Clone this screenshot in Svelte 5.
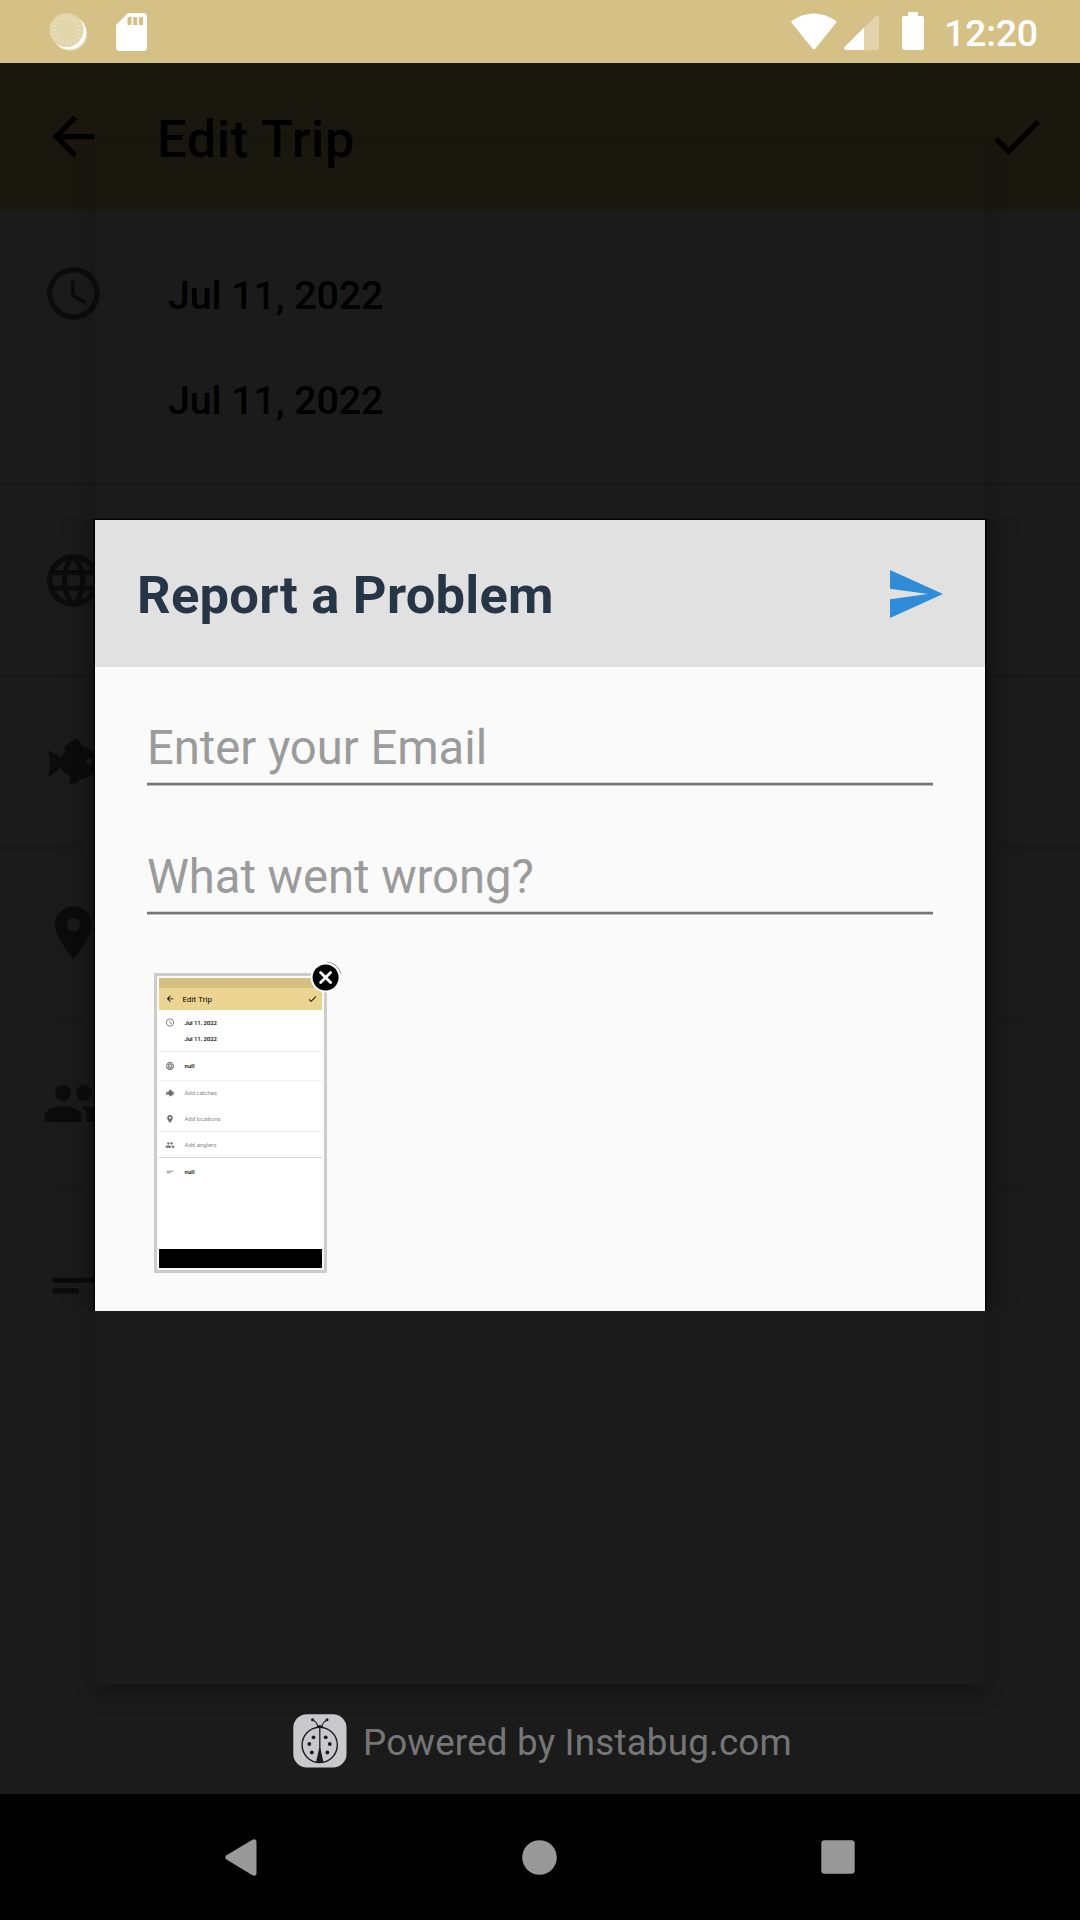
<script>
  const icons = {
    back: 'M20 11H7.83l5.59-5.59L12 4l-8 8 8 8 1.41-1.41L7.83 13H20v-2z',
    check: 'M9 16.17L4.83 12l-1.42 1.41L9 19 21 7l-1.41-1.41z',
    clock:
      'M11.99 2C6.47 2 2 6.48 2 12s4.47 10 9.99 10C17.52 22 22 17.52 22 12S17.52 2 11.99 2zM12 20c-4.42 0-8-3.58-8-8s3.58-8 8-8 8 3.58 8 8-3.58 8-8 8zm.5-13H11v6l5.25 3.15.75-1.23-4.5-2.67z',
    globe:
      'M11.99 2C6.47 2 2 6.48 2 12s4.47 10 9.99 10C17.52 22 22 17.52 22 12S17.52 2 11.99 2zm6.93 6h-2.95c-.32-1.25-.78-2.45-1.38-3.56 1.84.63 3.37 1.91 4.33 3.56zM12 4.04c.83 1.2 1.48 2.53 1.91 3.96h-3.82c.43-1.43 1.08-2.76 1.91-3.96zM4.26 14C4.1 13.36 4 12.69 4 12s.1-1.36.26-2h3.38c-.08.66-.14 1.32-.14 2s.06 1.34.14 2H4.26zm.82 2h2.95c.32 1.25.78 2.45 1.38 3.56-1.84-.63-3.37-1.9-4.33-3.56zm2.95-8H5.08c.96-1.66 2.49-2.93 4.33-3.56C8.81 5.55 8.35 6.75 8.03 8zM12 19.96c-.83-1.2-1.48-2.53-1.91-3.96h3.82c-.43 1.43-1.08 2.76-1.91 3.96zM14.34 14H9.66c-.09-.66-.16-1.32-.16-2s.07-1.35.16-2h4.68c.09.65.16 1.32.16 2s-.07 1.34-.16 2zm.25 5.56c.6-1.11 1.06-2.31 1.38-3.56h2.95c-.96 1.65-2.49 2.93-4.33 3.56zM16.36 14c.08-.66.14-1.32.14-2s-.06-1.34-.14-2h3.38c.16.64.26 1.31.26 2s-.1 1.36-.26 2h-3.38z',
    fish: 'M2.2 8 Q4.8 8.5 7 10.6 Q7.7 9.2 9.2 8.1 L8.2 7 Q9.5 5 13.2 3.1 L15.8 6.2 Q19.8 6.7 22.6 11.7 Q20.5 17.7 15 18.8 Q14 18.8 13.6 19.6 L13.1 20.1 L10.2 20.8 L10.9 17.6 Q8.2 16.5 6.8 14.2 Q4.8 16.8 2.2 18 Q3.8 13 2.2 8 Z M18 10.9 a1.1 1.1 0 1 0 .01 2.2 a1.1 1.1 0 1 0 -.01 -2.2 Z',
    place:
      'M12 2C8.13 2 5 5.13 5 9c0 5.25 7 13 7 13s7-7.75 7-13c0-3.87-3.13-7-7-7zm0 9.5c-1.38 0-2.5-1.12-2.5-2.5s1.12-2.5 2.5-2.5 2.5 1.12 2.5 2.5-1.12 2.5-2.5 2.5z',
    people:
      'M16 11c1.66 0 2.99-1.34 2.99-3S17.66 5 16 5s-3 1.34-3 3 1.34 3 3 3zm-8 0c1.66 0 2.99-1.34 2.99-3S9.66 5 8 5 5 6.34 5 8s1.34 3 3 3zm0 2c-2.33 0-7 1.17-7 3.5V19h14v-2.5c0-2.33-4.67-3.5-7-3.5zm8 0c-.29 0-.62.02-.97.05 1.16.84 1.97 1.97 1.97 3.45V19h6v-2.5c0-2.33-4.67-3.5-7-3.5z',
    notes: 'M4 9h16v2H4zm0 4h10v2H4z'
  };

  const rows = [
    { name: 'dates', icon: 'clock', lines: ['Jul 11, 2022', 'Jul 11, 2022'] },
    { name: 'species', icon: 'globe', lines: [] },
    { name: 'catches', icon: 'fish', lines: [] },
    { name: 'locations', icon: 'place', lines: [] },
    { name: 'anglers', icon: 'people', lines: [] },
    { name: 'notes', icon: 'notes', lines: [] }
  ];

  const preview = [
    { icon: 'clock', y: 44.5, text: 'Jul 11, 2022', width: 32.5, strong: true },
    { icon: null, y: 60.5, text: 'Jul 11, 2022', width: 32.5, strong: true },
    { icon: 'globe', y: 88, text: 'null', width: 10, strong: true },
    { icon: 'fish', y: 115, text: 'Add catches', width: 32.5, strong: false },
    { icon: 'place', y: 141, text: 'Add locations', width: 36, strong: false },
    { icon: 'people', y: 167, text: 'Add anglers', width: 32, strong: false },
    { icon: 'notes', y: 194, text: 'null', width: 10, strong: true }
  ];

  const ticks = Array.from({ length: 20 }, (_, i) => i * 18);
</script>

{#snippet icon(name)}
  <svg class="icon" viewBox="0 0 24 24"><path d={icons[name]} fill-rule="evenodd" /></svg>
{/snippet}

<div class="screen">
  <header class="status">
    <svg class="sync" viewBox="0 0 38 40">
      <circle cx="21" cy="21.5" r="17.3" fill="#fff" opacity=".45" />
      <circle cx="20" cy="20.5" r="17" fill="#fff" />
      <circle cx="17.5" cy="18" r="17" fill="#e2d5aa" />
      {#each ticks as angle}
        <path d="M17.5 2.500v5" stroke="#ebe1c1" stroke-width="1.300" transform="rotate({angle} 17.5 18)" />
      {/each}
    </svg>
    <svg class="sd" viewBox="0 0 31 38">
      <path
        fill="#fff"
        fill-rule="evenodd"
        d="M12 0H27.500a3.500 3.500 0 0 1 3.500 3.500V34.500a3.500 3.500 0 0 1-3.500 3.500H3.500A3.500 3.500 0 0 1 0 34.500V12ZM11.500 4v8h4V4ZM17.300 4v8h4V4ZM23 4v8h4V4Z"
      />
    </svg>
    <span class="grow"></span>
    <svg class="wifi" viewBox="0 0 46 37"><path fill="#fff" d="M.8 10Q-.3 8.500 1 7.600Q22.800-6.400 44.800 7.600Q46.100 8.500 45 10L24.800 35Q22.900 37.600 21 35Z" /></svg>
    <svg class="signal" viewBox="0 0 35 35">
      <path fill="#e2d3ac" d="M0 33L32.500.5Q35-.8 35 2V33a2 2 0 0 1-2 2H2Q0 35 0 33Z" />
      <path fill="#fff" d="M20 12.500V35H2Q-.8 34 .8 31.700Z" />
    </svg>
    <svg class="battery" viewBox="0 0 22 38"><path fill="#fff" d="M6 0h10v4h4a2 2 0 0 1 2 2v30a2 2 0 0 1-2 2H2a2 2 0 0 1-2-2V6a2 2 0 0 1 2-2h4Z" /></svg>
    <span class="time">12:20</span>
  </header>

  <div class="appbar">
    {@render icon('back')}
    <h1>Edit Trip</h1>
    {@render icon('check')}
  </div>

  <main class="trip">
    {#each rows as row}
      <section class="row {row.name}">
        {@render icon(row.icon)}
        <div class="lines">
          {#each row.lines as line}<p>{line}</p>{/each}
        </div>
      </section>
    {/each}
  </main>

  <nav class="navbar">
    <svg viewBox="0 0 32 37"><path fill="#999" d="M1.500 16.300Q-1 18.500 1.500 20.500L27 36Q31.500 38 31.500 34V3Q31.500-1.200 27 1Z" /></svg>
    <svg viewBox="0 0 35 35"><circle cx="17.500" cy="17.500" r="17.300" fill="#999" /></svg>
    <svg viewBox="0 0 34 34"><rect x=".3" y=".3" width="33.400" height="33.400" rx="3" fill="#999" /></svg>
  </nav>

  <div class="window"></div>

  <div class="dialog">
    <div class="titlebar">
      <h2>Report a Problem</h2>
      <svg class="send" viewBox="0 0 53 48"><path fill="#2e8cd8" d="M0 0L53 24L0 48V29.300L38 24L0 18.800Z" /></svg>
    </div>
    <div class="form">
      <div class="field">Enter your Email</div>
      <div class="field">What went wrong?</div>
      <div class="attachment">
        <svg class="shot" viewBox="0 0 163 290">
          <rect width="163" height="290" fill="#fff" />
          <rect width="163" height="10" fill="#d4bf83" />
          <rect y="10" width="163" height="22" fill="#ebd392" />
          <path d={icons.back} transform="translate(6.300 16) scale(.4)" />
          <text class="shot-title" x="23.500" y="24" textLength="29.500">Edit Trip</text>
          <path d={icons.check} transform="translate(148.300 16) scale(.42)" />
          {#each preview as item}
            {#if item.icon}
              <path
                d={icons[item.icon]}
                fill="#6f6f6f"
                fill-rule="evenodd"
                transform="translate(6.200 {item.y - 4.800}) scale(.4)"
              />
            {/if}
            <text class={item.strong ? 'shot-strong' : 'shot-hint'} x="25.500" y={item.y + 2.400} textLength={item.width}>{item.text}</text>
          {/each}
          <path d="M0 73.500H163M0 102.500H163M0 153.500H163" stroke="#eee" />
          <path d="M0 179.500H163" stroke="#d6d6d6" />
          <rect y="271" width="163" height="19" />
        </svg>
        <svg class="remove" viewBox="0 0 32 32">
          <path d="M17 1.200A14.500 14.500 0 0 1 30.800 13" fill="none" stroke="#777" stroke-width=".8" />
          <circle cx="15.600" cy="16.500" r="15" fill="#fff" />
          <circle cx="15.600" cy="16.500" r="13" />
          <path d="M10.600 11.500l10 10M20.600 11.500l-10 10" stroke="#fff" stroke-width="2.800" stroke-linecap="round" />
        </svg>
      </div>
    </div>
  </div>

  <div class="powered">
    <svg viewBox="0 0 54 54">
      <rect x=".3" y=".3" width="53.200" height="53.200" rx="13.500" fill="#c9c8cd" />
      <g fill="none" stroke="#1b1b1b">
        <circle cx="26.700" cy="31" r="17.600" stroke-width="1.400" />
        <path d="M26.800 13V47" stroke-width="1.300" />
        <path d="M25 12Q23.500 8 19.700 5.800M28.800 12Q30.200 8 34 5.800" stroke-width="1.100" />
      </g>
      <g fill="#1b1b1b">
        <path d="M21.500 14.500Q24 11 26.800 11Q29.500 11 32 14.500Q27 12.800 21.500 14.500ZM26.300 34L23 48.300Q26.800 49.500 30.500 48.300L27.300 34Z" />
        <circle cx="19.500" cy="5.700" r="1.500" /><circle cx="34" cy="5.700" r="1.500" />
        <circle cx="20.500" cy="23.300" r="1.900" /><circle cx="32.700" cy="23.300" r="1.900" />
        <circle cx="16.300" cy="30" r="1.900" /><circle cx="36.800" cy="30" r="1.900" />
        <circle cx="18.800" cy="38.500" r="1.900" /><circle cx="34.400" cy="38.500" r="1.900" />
      </g>
    </svg>
    <span>Powered by Instabug.com</span>
  </div>
</div>

<style>
  :global(body) {
    background: #000;
  }
  .screen {
    position: relative;
    display: flex;
    flex-direction: column;
    width: 1080px;
    height: 1920px;
    overflow: hidden;
    background: #1b1b1b;
    font-family: Roboto, 'Liberation Sans', sans-serif;
    white-space: nowrap;
  }
  h1,
  h2,
  p {
    margin: 0;
  }
  svg {
    display: block;
    flex: none;
  }
  .icon {
    width: 63px;
    height: 63px;
  }

  .status {
    display: flex;
    align-items: flex-start;
    box-sizing: border-box;
    height: 63px;
    padding: 12px 0 0 49px;
    background: #d5c085;
  }
  .sync {
    width: 38px;
    height: 40px;
    margin-right: 29px;
  }
  .sd {
    width: 31px;
    height: 38px;
    margin-top: 0.5px;
  }
  .grow {
    flex: 1;
  }
  .wifi {
    width: 46px;
    height: 37px;
    margin: 1px 7px 0 0;
  }
  .signal {
    width: 35px;
    height: 35px;
    margin: 3px 23px 0 0;
  }
  .battery {
    width: 22px;
    height: 38px;
  }
  .time {
    width: 136px;
    margin-left: 20px;
    font-size: 37.5px;
    font-weight: 500;
    letter-spacing: -0.25px;
    line-height: 42px;
    color: #fff;
  }

  .appbar {
    display: flex;
    align-items: center;
    box-sizing: border-box;
    height: 147px;
    padding: 0 32px 0 42px;
    background: #1a170f;
  }
  .appbar h1 {
    flex: 1;
    margin-left: 52px;
    padding-top: 4px;
    font-size: 52.5px;
    font-weight: 500;
    letter-spacing: 0.55px;
    line-height: 62px;
    color: #000;
  }

  .trip {
    flex: 1;
  }
  .row {
    display: flex;
    box-sizing: border-box;
    padding-left: 42px;
    border-bottom: 3px solid #181818;
  }
  .row .icon {
    fill: #0c0c0c;
  }
  .lines {
    margin-left: 63px;
    font-size: 39.4px;
    font-weight: 500;
    letter-spacing: -0.1px;
    line-height: 105px;
  }
  .dates {
    height: 276px;
    padding-top: 52px;
  }
  .dates .lines {
    margin-top: -19px;
  }
  .species {
    height: 192px;
    padding-top: 63px;
  }
  .catches {
    height: 171px;
    padding-top: 52px;
  }
  .locations {
    height: 171px;
    padding-top: 51.5px;
  }
  .anglers {
    height: 171px;
    padding-top: 52px;
  }
  .notes {
    padding-top: 63px;
    border: 0;
  }

  .navbar {
    display: flex;
    align-items: center;
    justify-content: space-between;
    box-sizing: border-box;
    height: 126px;
    padding: 0 225px;
    background: #000;
  }
  .navbar svg:nth-child(1) {
    width: 32px;
    height: 37px;
  }
  .navbar svg:nth-child(2) {
    width: 35px;
    height: 35px;
  }
  .navbar svg:nth-child(3) {
    width: 34px;
    height: 34px;
  }

  /* Full-height dialog window: only its drop shadow is visible. */
  .window {
    position: absolute;
    left: 95px;
    top: 145px;
    width: 890px;
    height: 1539px;
    box-shadow: 0 9px 20px rgba(0, 0, 0, 0.25);
  }
  .dialog {
    position: absolute;
    left: 95px;
    top: 520px;
    width: 890px;
    height: 791px;
    background: #fafafa;
    box-shadow:
      0 0 0 1.5px #050305,
      0 0 34px rgba(0, 0, 0, 0.25);
    clip-path: inset(-1.5px -40px 0 -40px);
  }
  .titlebar {
    display: flex;
    align-items: center;
    justify-content: space-between;
    box-sizing: border-box;
    height: 147px;
    padding: 0 42px;
    background: #e1e1e1;
  }
  .titlebar h2 {
    padding-top: 3px;
    font-size: 52.5px;
    font-weight: 700;
    letter-spacing: 0.25px;
    line-height: 62px;
    color: #263647;
  }
  .send {
    width: 53px;
    height: 48px;
  }
  .form {
    display: flex;
    flex-direction: column;
    padding: 43px 52px 0;
  }
  .field {
    box-sizing: border-box;
    height: 75px;
    margin-bottom: 54px;
    padding-top: 10px;
    border-bottom: 2px solid #777;
    box-shadow:
      0 1px #bebebe,
      inset 0 -1px #d8d8d8;
    font-size: 47.25px;
    letter-spacing: -0.05px;
    line-height: 56px;
    color: #9b9b9b;
  }
  .attachment {
    position: relative;
    box-sizing: border-box;
    width: 173px;
    height: 300px;
    margin: 5px 0 0 7px;
    padding: 2px;
    border: 3px solid #ccc;
  }
  .shot {
    width: 163px;
    height: 290px;
  }
  .shot-title {
    font-size: 7.9px;
    font-weight: 400;
  }
  .shot-strong {
    font-size: 6px;
    font-weight: 500;
  }
  .shot-hint {
    font-size: 6px;
    fill: #8a8a8a;
  }
  .remove {
    position: absolute;
    left: 153px;
    top: -15px;
    width: 32px;
    height: 32px;
  }

  .powered {
    position: absolute;
    left: 293px;
    top: 1713px;
    display: flex;
    align-items: flex-start;
    gap: 16px;
    font-size: 36.75px;
    letter-spacing: 0.2px;
    line-height: 54px;
    color: #767676;
  }
  .powered svg {
    width: 54px;
    height: 54px;
    margin-top: 1px;
  }
  .powered span {
    padding-top: 3px;
  }
</style>
